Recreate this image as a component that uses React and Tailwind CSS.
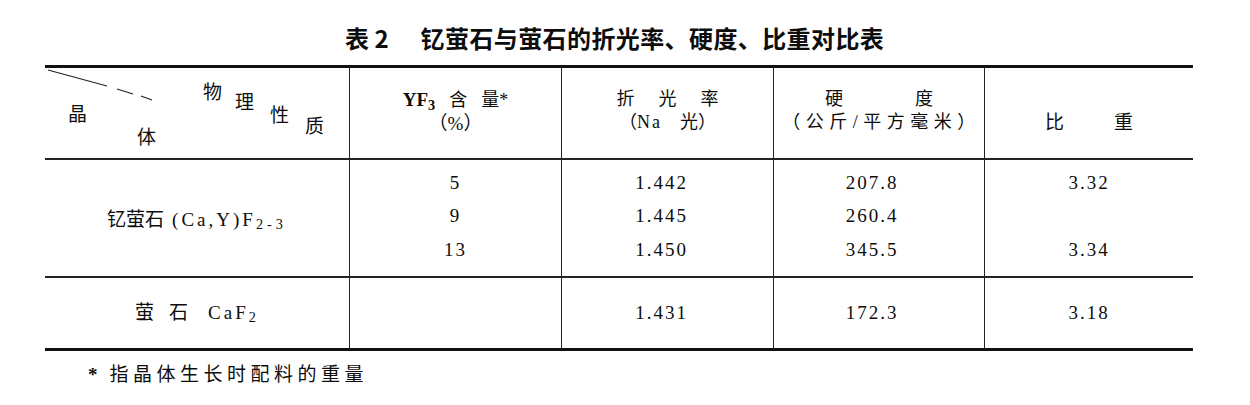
const rows = [
  { n: '5', ri: '1.442', h: '207.8', sg: '3.32' },
  { n: '9', ri: '1.445', h: '260.4', sg: '' },
  { n: '13', ri: '1.450', h: '345.5', sg: '3.34' },
];

function Num({ children }) {
  return (
    <div className="h-[33.5px] flex items-center justify-center text-[19px] tracking-[2px] font-['Liberation_Serif',serif]">
      {children}
    </div>
  );
}

export default function App() {
  return (
    <div className="w-[1250px] h-[405px] bg-white text-[#0d0d0d] overflow-hidden font-['Liberation_Serif','Noto_Sans_CJK_SC',serif]">
      {/* title */}
      <div className="h-[65px] pl-[345px] pt-[24px] leading-[28px] text-[24px] font-bold font-['Noto_Sans_CJK_SC',sans-serif] whitespace-nowrap">
        <span>表 2</span>
        <span className="ml-[32px] tracking-[0.4px]">钇萤石与萤石的折光率、硬度、比重对比表</span>
      </div>

      <div className="ml-[45px] w-[1148px] border-t-[3px] border-b-[3px] border-[#111]">
        {/* header */}
        <div className="grid grid-cols-[305px_212px_212px_211px_208px] h-[92px] border-b-2 border-[#222]">
          <div className="relative border-r-[1.5px] border-[#222] text-[19px] leading-[20px] font-['Noto_Sans_CJK_SC',serif]">
            <svg className="absolute left-0 top-0" width="120" height="40" viewBox="0 0 120 40">
              <path d="M3 2 L62 18 M72 21 L88 26 M96 28 L107 32" stroke="#222" strokeWidth="1.2" fill="none" />
            </svg>
            <span className="absolute left-[158px] top-[13px]">物</span>
            <span className="absolute left-[190px] top-[23px]">理</span>
            <span className="absolute left-[225px] top-[36px]">性</span>
            <span className="absolute left-[260px] top-[47px]">质</span>
            <span className="absolute left-[23px] top-[35px]">晶</span>
            <span className="absolute left-[92px] top-[58px]">体</span>
          </div>
          <div className="flex flex-col items-center pt-[20px] leading-[23px] text-[18px] border-r-[1.5px] border-[#222]">
            <div className="whitespace-nowrap">
              <span className="font-bold text-[19px]">YF<sub>3</sub></span>
              <span className="ml-[14px]">含</span>
              <span className="ml-[14px]">量*</span>
            </div>
            <div className="text-[19px]">（%）</div>
          </div>
          <div className="flex flex-col items-center pt-[20px] leading-[23px] text-[18px] border-r-[1.5px] border-[#222]">
            <div className="tracking-[24px] mr-[-24px]">折光率</div>
            <div className="whitespace-nowrap">（<span className="tracking-[2px]">Na</span><span className="ml-[18px]">光）</span></div>
          </div>
          <div className="flex flex-col items-center pt-[20px] leading-[23px] text-[18px] border-r-[1.5px] border-[#222]">
            <div className="whitespace-nowrap">硬<span className="ml-[72px]">度</span></div>
            <div className="tracking-[5.5px] mr-[-5px] whitespace-nowrap">（公斤/平方毫米）</div>
          </div>
          <div className="flex items-start justify-center pt-[43px] leading-[23px] text-[19px]">
            比<span className="ml-[50px]">重</span>
          </div>
        </div>

        {/* yttrofluorite */}
        <div className="grid grid-cols-[305px_212px_212px_211px_208px] h-[118px] border-b-2 border-[#222]">
          <div className="flex items-center justify-center pt-[4px] text-[19px] border-r-[1.5px] border-[#222] whitespace-nowrap">
            钇萤石<span className="ml-[8px] tracking-[3px]">(Ca,Y)F<sub className="tracking-[4px]">2-3</sub></span>
          </div>
          <div className="flex flex-col justify-center pb-[3px] border-r-[1.5px] border-[#222]">
            {rows.map((r) => <Num key={r.n}>{r.n}</Num>)}
          </div>
          <div className="flex flex-col justify-center pb-[3px] pr-[12px] border-r-[1.5px] border-[#222]">
            {rows.map((r) => <Num key={r.ri}>{r.ri}</Num>)}
          </div>
          <div className="flex flex-col justify-center pb-[3px] pr-[14px] border-r-[1.5px] border-[#222]">
            {rows.map((r) => <Num key={r.h}>{r.h}</Num>)}
          </div>
          <div className="flex flex-col justify-center pb-[3px]">
            {rows.map((r, i) => <Num key={i}>{r.sg}</Num>)}
          </div>
        </div>

        {/* fluorite */}
        <div className="grid grid-cols-[305px_212px_212px_211px_208px] h-[70px]">
          <div className="flex items-center justify-center text-[19px] border-r-[1.5px] border-[#222] whitespace-nowrap">
            萤<span className="ml-[15px]">石</span><span className="ml-[20px] tracking-[3px]">CaF<sub>2</sub></span>
          </div>
          <div className="border-r-[1.5px] border-[#222]"></div>
          <div className="flex items-center justify-center pr-[12px] border-r-[1.5px] border-[#222]">
            <Num>1.431</Num>
          </div>
          <div className="flex items-center justify-center pr-[14px] border-r-[1.5px] border-[#222]">
            <Num>172.3</Num>
          </div>
          <div className="flex items-center justify-center">
            <Num>3.18</Num>
          </div>
        </div>
      </div>

      {/* footnote */}
      <div className="mt-[12px] pl-[88px] text-[19px] leading-[24px] whitespace-nowrap">
        <span className="font-bold">*</span>
        <span className="ml-[12px] tracking-[4.5px]">指晶体生长时配料的重量</span>
      </div>
    </div>
  );
}
